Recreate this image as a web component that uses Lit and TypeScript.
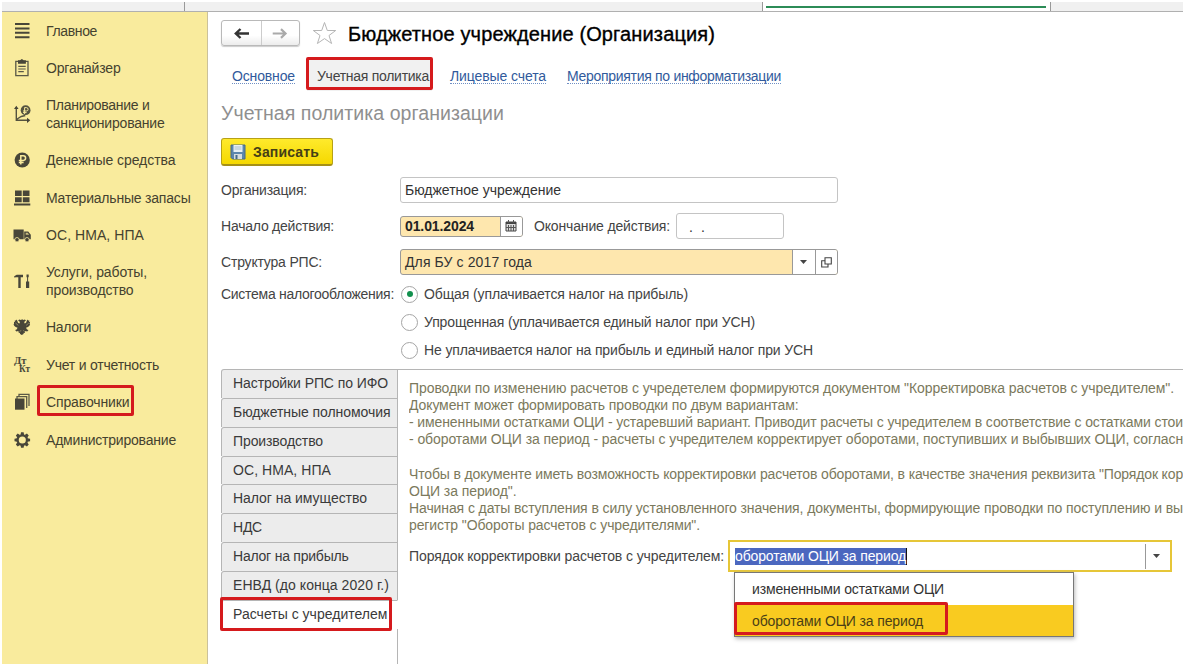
import { LitElement, html, css, svg, nothing } from "lit";
import { customElement, property, state } from "lit/decorators.js";
import { classMap } from "lit/directives/class-map.js";
import { styleMap } from "lit/directives/style-map.js";

const ruler = document.createElement("canvas").getContext("2d")!;

/** A single line of text, tracked so that it occupies a given width. */
@customElement("fit-text")
class FitText extends LitElement {
  @property() text = "";
  @property({ type: Number }) width = 0;
  @state() private spacing = 0;

  static styles = css`
    :host { display: block; white-space: pre; flex: none; }
  `;

  firstUpdated() {
    const cs = getComputedStyle(this);
    ruler.font = `${cs.fontWeight} ${cs.fontSize} ${cs.fontFamily}`;
    const natural = ruler.measureText(this.text).width;
    this.spacing = (this.width - natural) / this.text.length;
  }

  render() {
    return html`<span style=${styleMap({ letterSpacing: `${this.spacing.toFixed(3)}px` })}>${this.text}</span>`;
  }
}

const t = (text: string, width: number) => html`<fit-text .text=${text} .width=${width}></fit-text>`;

const icons: Record<string, unknown> = {
  menu: svg`<path d="M2 2h14.500M2 6.400h14.500M2 10.800h14.500M2 15.200h14.500" stroke="#484639" stroke-width="2"/>`,
  clipboard: svg`<path d="M2.800 2.300h12.200v14.300H2.800z" fill="none" stroke="#5a5847" stroke-width="1.300"/><path d="M5 1.300h2L8.900 0l1.800 1.300h2.200v3.400H5z" fill="#484639"/><path d="M5.300 7.300h7.400M5.300 10h7.400M5.300 12.700h5.500" stroke="#5a5847" stroke-width="1.200"/>`,
  plan: svg`<path d="M3.300 2v13.300h12M3.300 14.500l5-3 4-1" fill="none" stroke="#55533f" stroke-width="1.400"/><path d="M1 4l2.300-3.300L5.600 4zM14 12.700l3.300 2.600-3.300 2.600z" fill="#484639"/><circle cx="12.600" cy="5.200" r="4.900" fill="#55533f"/><path d="M11.600 9V2.600h1.800a1.700 1.700 0 0 1 0 3.400H10M10 7.600h3.600" fill="none" stroke="#f9eb9d" stroke-width="1"/>`,
  coin: svg`<circle cx="9.200" cy="9" r="7.600" fill="#484639"/><path d="M7.800 13.500V4.800h2.500a2.200 2.200 0 0 1 0 4.600H5.800M5.800 11.400h4.800" fill="none" stroke="#f9eb9d" stroke-width="1.500"/>`,
  boxes: svg`<path d="M2 1.500h6.700v5.600H2zM9.800 1.500h6.700v5.600H9.800zM2 8.200h6.700v5.100H2zM9.800 8.200h6.700v5.100H9.800zM1 14.600h16.300v1.900H1z" fill="#484639"/>`,
  truck: svg`<path d="M.5 3.500h10.200v9.800H.5zM11.200 5.500h4l2.600 3.300v4.500h-6.600z" fill="#484639"/><circle cx="4" cy="13.700" r="2.200" fill="#484639" stroke="#f9eb9d" stroke-width=".8"/><circle cx="14" cy="13.700" r="2.200" fill="#484639" stroke="#f9eb9d" stroke-width=".8"/><path d="M12.700 6.700h2l1.500 2.100h-3.500z" fill="#c8bd80"/>`,
  tools: svg`<path d="M1.200 5.600V4.200L3.700 2.800H10v2.400H7.700V16H5.300V5.200H3.200zM13 9.500h3.200V16H13zM14.100 4.800h1v5h-1zM13.500 2.500h2.200v2.800h-2.200z" fill="#484639"/>`,
  eagle: svg`<path d="M9.200 1.200l1 .7 1.700-.4 1.200 1.200-1.200.4-.7 1.600.6.900 1.300-.9.800-2.300 1-1 .3 1.400 1-.8v2l.9-.2-.5 2.200.5.600-.9 1.500-1.300.9-1.900.7 1 1.900 1.500.5-1.300 1.400-1.900-.4-.6 2-.9-.3-.3 1.200-1.700 1-1.700-1-.3-1.200-.9.300-.6-2-1.900.4-1.300-1.400 1.500-.5 1-1.900-1.900-.7-1.300-.9-.9-1.500.5-.6L1 3.800l.9.200V2l1 .8.300-1.400 1 1L5 4.700l1.300.9.600-.9-.7-1.600L5 2.700l1.200-1.200 1.700.4z" fill="#484639"/><path d="M2.500 5l2.800 2.400M15.900 5l-2.800 2.400M6.800 13.800l1.200-1.600M11.600 13.800l-1.200-1.600" stroke="#b9ae75" stroke-width=".6"/>`,
  dtkt: svg`<g font-family="Liberation Serif, serif" font-weight="700" font-size="9.500" fill="#484639"><text x="1" y="7.500" textLength="12.500" lengthAdjust="spacingAndGlyphs">Дт</text><text x="6" y="15.700" textLength="11" lengthAdjust="spacingAndGlyphs">Кт</text></g>`,
  books: svg`<path d="M6 3.500V1.300h10V13M4 6V3.600h9.700V15" fill="none" stroke="#5b5946" stroke-width="1.300"/><path d="M2 5.500h9.500v11.200H2z" fill="#484639"/>`,
  gear: svg`<circle cx="9.300" cy="9" r="4.700" fill="none" stroke="#484639" stroke-width="2.300"/>${[0, 45, 90, 135, 180, 225, 270, 315].map(
    (a) => svg`<path d="M8 1.200h2.600l.5 2.700H7.500z" fill="#484639" transform=${`rotate(${a} 9.300 9)`}/>`
  )}`,
};

type Line = [string, number];
const sections: { icon: string; lines: Line[]; mark?: boolean }[] = [
  { icon: "menu", lines: [["Главное", 51]] },
  { icon: "clipboard", lines: [["Органайзер", 74.5]] },
  { icon: "plan", lines: [["Планирование и", 103.5], ["санкционирование", 118.5]] },
  { icon: "coin", lines: [["Денежные средства", 129.5]] },
  { icon: "boxes", lines: [["Материальные запасы", 144.5]] },
  { icon: "truck", lines: [["ОС, НМА, НПА", 98]] },
  { icon: "tools", lines: [["Услуги, работы,", 101], ["производство", 87.5]] },
  { icon: "eagle", lines: [["Налоги", 45]] },
  { icon: "dtkt", lines: [["Учет и отчетность", 113]] },
  { icon: "books", lines: [["Справочники", 83.5]], mark: true },
  { icon: "gear", lines: [["Администрирование", 130]] },
];

const pages: Line[] = [
  ["Настройки РПС по ИФО", 155],
  ["Бюджетные полномочия", 157.5],
  ["Производство", 90],
  ["ОС, НМА, НПА", 98],
  ["Налог на имущество", 134],
  ["НДС", 29],
  ["Налог на прибыль", 115.5],
  ["ЕНВД (до конца 2020 г.)", 156],
  ["Расчеты с учредителем", 154.5],
];

const notes: Line[] = [
  ['Проводки по изменению расчетов с учредетелем формируются документом "Корректировка расчетов с учредителем".', 765],
  ["Документ может формировать проводки по двум вариантам:", 389.5],
  ["- имененными остатками ОЦИ - устаревший вариант. Приводит расчеты с учредителем в соответствие с остатками стои", 774],
  ["- оборотами ОЦИ за период - расчеты с учредителем корректирует оборотами, поступивших и выбывших ОЦИ, согласн", 774],
  ["", 0],
  ['Чтобы в документе иметь возможность корректировки расчетов оборотами, в качестве значения реквизита "Порядок кор', 774],
  ['ОЦИ за период".', 107.5],
  ["Начиная с даты вступления в силу установленного значения, документы, формирующие проводки по поступлению и вы", 774],
  ['регистр "Обороты расчетов с учредителями".', 291],
];

@customElement("app-root")
class AppRoot extends LitElement {
  static styles = css`
    *, :host { box-sizing: border-box; }
    :host {
      display: flex; flex-direction: column; width: 1185px; height: 666px;
      padding: 2px; overflow: hidden; background: #fff; color: #444;
      font: 14px/17px "Liberation Sans", Arial, sans-serif;
    }
    svg { display: block; flex: none; }
    .tabs { display: flex; flex: none; height: 10px; background: #f0f0f0; border-bottom: 1px solid #b0b0b0; }
    .tab { border-right: 1px solid #999; }
    .tab.first { width: 183px; }
    .tab.second { width: 578px; }
    .tab.active { width: 288px; background: #fff; padding: 4px 4px 0 3px; }
    .line { height: 2px; background: #2c8c57; }
    .body { display: flex; flex: 1; min-height: 0; overflow: hidden; }
    .side { width: 206px; flex: none; background: #f9eb9d; border-right: 1px solid #cbc19a; color: #45422f; }
    .item { display: flex; align-items: center; height: 37.5px; padding-left: 11px; gap: 15px; }
    .item.tall { height: 54.5px; }
    .item .lines { position: relative; line-height: 17.4px; padding-top: 1px; }
    .mark { position: absolute; border: 3px solid #d51a1d; border-radius: 2px; }
    .mark.books { left: -9px; top: -8px; width: 97px; height: 31px; }
    .main { flex: 1; min-width: 0; padding: 8px 0 0 13px; display: flex; flex-direction: column; overflow: hidden; }
    .main > * { flex: none; }
    .head { display: flex; align-items: center; height: 26px; }
    .nav { display: flex; width: 79px; height: 26px; border: 1px solid #b9b9b9; border-radius: 3px; background: linear-gradient(#fff 60%, #ececec); box-shadow: 0 1px 1px #ccc; }
    .nav svg + svg { border-left: 1px solid #ccc; }
    .star { margin: 0 11px 0 12px; }
    .title { font-size: 20px; line-height: 26px; color: #000; -webkit-text-stroke: .35px #000; padding-top: 1px; }
    .links { display: flex; align-items: center; height: 34px; margin-top: 11px; padding-left: 11px; color: #315a9c; }
    .link { border-bottom: 1px dotted #6f8fc4; line-height: 14px; padding-top: 1px; margin-top: 4px; }
    .chosen { position: relative; margin: 0 18px 0 12px; padding: 11px 0 6px 10px; width: 125px; color: #444; background: #f1f1f1; }
    .mark.policy { inset: 0 -1px 1px -1px; }
    .gap { margin-right: 21px; }
    .subtitle { font-size: 19.5px; line-height: 24px; color: #8f8f8f; margin-top: 10px; }
    .save { display: flex; align-items: center; gap: 7px; width: 112px; height: 28px; margin-top: 13px; padding-left: 8px; border: 1px solid #b7a116; border-bottom: 2px solid #a59016; border-radius: 3px; background: linear-gradient(#ffea2c, #f5d800); font-weight: 700; color: #453f16; }
    .save fit-text { padding-top: 1px; }
    .row { display: flex; align-items: center; height: 26px; margin-top: 10px; }
    .row.lead { margin-top: 11px; }
    .label { width: 179px; flex: none; }
    .field { display: flex; align-items: center; height: 26px; border: 1px solid #c4c4c4; border-radius: 3px; padding-left: 4px; background: #fff; color: #333; overflow: hidden; }
    .field.org, .field.rps { width: 438px; }
    .field.rps, .field.date { border-color: #999; background: #fee7ae; }
    .field.date { width: 123px; height: 21px; font-weight: 700; color: #222; }
    .field.end { width: 108px; padding: 2px 0 0 8px; margin-left: 6px; }
    .cell { align-self: stretch; display: grid; place-items: center; width: 22.5px; border-left: 1px solid #999; background: #fff; }
    .cell.push { margin-left: auto; }
    .until { margin-left: 11px; }
    .choices { display: flex; margin-top: 5px; margin-bottom: 5px; }
    .choices .label { width: 180px; padding-top: 6px; }
    .option { display: flex; align-items: center; height: 28px; gap: 6px; }
    .radio { width: 17px; height: 17px; border: 1px solid #a5a5a5; border-radius: 50%; display: grid; place-items: center; }
    .dot { width: 6px; height: 6px; border-radius: 50%; background: #12904e; }
    .main > .panel { display: flex; flex: 1; min-height: 0; }
    .pages { display: flex; flex-direction: column; width: 177px; flex: none; }
    .page { position: relative; height: 28.85px; flex: none; border: 1px solid #b5b5b5; border-bottom: 0; border-radius: 3px 0 0 0; background: #ececec; padding: 5px 0 0 11px; color: #3a3a3a; }
    .page.on { background: #fff; border-color: #b5b5b5 transparent transparent; }
    .mark.calc { left: -2px; top: -4px; width: 172px; height: 34px; }
    .rest { flex: 1; border-right: 1px solid #b5b5b5; }
    .content { flex: 1; min-width: 0; border-top: 1px solid #b5b5b5; padding: 10px 0 0 11px; }
    .notes { line-height: 17.15px; color: #7b795c; overflow: hidden; }
    .note { height: 17.15px; }
    .order { display: flex; align-items: center; margin-top: 6px; height: 32px; }
    .combo { position: relative; display: flex; align-items: center; width: 444px; height: 32px; margin-left: 4px; border: 2px solid #e6c638; padding-left: 5px; background: #fff; }
    .picked { background: #4b67bf; color: #fff; border-right: 1px solid #111; line-height: 17px; }
    .drop { margin-left: auto; height: 25px; width: 25px; border-left: 1px solid #999; display: grid; place-items: center; padding-right: 3px; }
    .list { position: absolute; left: 4px; top: 30px; width: 340px; height: 65px; border: 1px solid #777; background: #fff; box-shadow: 1px 2px 4px #bbb; color: #333; }
    .entry { height: 31.5px; padding: 8px 0 0 17px; }
    .entry.on { background: #f9cb20; color: #4a3f16; }
    .mark.chosen-entry { left: -1px; top: 29px; width: 214px; height: 33px; }
  `;

  private arrow() {
    return svg`<path d="M0 0h7l-3.500 4z" fill="#444"/>`;
  }

  render() {
    return html`
      <div class="tabs">
        <div class="tab first"></div>
        <div class="tab second"></div>
        <div class="tab active"><div class="line"></div></div>
      </div>
      <div class="body">
        <nav class="side">
          ${sections.map(
            (s) => html`<div class=${classMap({ item: true, tall: s.lines.length > 1 })}>
              <svg width="18" height="18" viewBox="0 0 18 18">${icons[s.icon]}</svg>
              <div class="lines">${s.lines.map(([a, w]) => t(a, w))}${s.mark ? html`<div class="mark books"></div>` : nothing}</div>
            </div>`
          )}
        </nav>
        <main class="main">
          <div class="head">
            <div class="nav">
              <svg width="39" height="24" viewBox="0 0 39 24"><path d="M27 12.500H14M18.500 8l-4.700 4.500 4.700 4.500" fill="none" stroke="#333" stroke-width="2.400"/></svg>
              <svg width="38" height="24" viewBox="0 0 38 24"><path d="M11 12.500h13M19.500 8l4.700 4.500-4.700 4.500" fill="none" stroke="#aaa" stroke-width="2.200"/></svg>
            </div>
            <svg class="star" width="25" height="24" viewBox="0 0 25 24"><path d="M12.500 1.500l2.800 8h8.400l-6.700 5 2.600 8-7.100-4.900-7.100 4.900 2.600-8-6.700-5h8.400z" fill="#fff" stroke="#b5b5b5"/></svg>
            <div class="title">${t("Бюджетное учреждение (Организация)", 367)}</div>
          </div>
          <div class="links">
            <div class="link">${t("Основное", 63)}</div>
            <div class="chosen">${t("Учетная политика", 112)}<div class="mark policy"></div></div>
            <div class="link gap">${t("Лицевые счета", 96)}</div>
            <div class="link">${t("Мероприятия по информатизации", 214)}</div>
          </div>
          <div class="subtitle">${t("Учетная политика организации", 283)}</div>
          <div class="save">
            <svg width="16" height="16" viewBox="0 0 16 16"><path d="M1 1h14v14H2.500L1 13.500z" fill="#5c87ad" stroke="#45698a"/><path d="M3.500 1h9v7h-9z" fill="#e9f1f5"/><path d="M4.500 3h7M4.500 5h7" stroke="#a9bfce"/><path d="M4 10h8v5H4z" fill="#d5dde0"/><path d="M5.500 11h2v4h-2z" fill="#45698a"/></svg>
            ${t("Записать", 66)}
          </div>
          <div class="row lead">
            <div class="label">${t("Организация:", 86)}</div>
            <div class="field org">${t("Бюджетное учреждение", 156)}</div>
          </div>
          <div class="row">
            <div class="label">${t("Начало действия:", 113)}</div>
            <div class="field date">${t("01.01.2024", 69)}
              <div class="cell push"><svg width="12" height="12" viewBox="0 0 12 12"><path d="M1 2h10v9H1z" fill="#ddd" stroke="#444"/><path d="M1 3h10" stroke="#444" stroke-width="2"/><path d="M3.500 0v3M8.500 0v3M3.500 5v6M6 5v6M8.500 5v6M1 7.500h10" stroke="#555"/></svg></div>
            </div>
            <div class="until">${t("Окончание действия:", 136)}</div>
            <div class="field end">${t(" .  .", 20)}</div>
          </div>
          <div class="row">
            <div class="label">${t("Структура РПС:", 101)}</div>
            <div class="field rps">${t("Для БУ с 2017 года", 127)}
              <div class="cell push"><svg width="7" height="4" viewBox="0 0 7 4">${this.arrow()}</svg></div>
              <div class="cell"><svg width="11" height="11" viewBox="0 0 11 11"><path d="M4 .7h6.300V7H4zM4 3.700H.7V10H7V7" fill="none" stroke="#444" stroke-width="1.100"/></svg></div>
            </div>
          </div>
          <div class="choices">
            <div class="label">${t("Система налогообложения:", 173)}</div>
            <div>
              <div class="option"><span class="radio"><span class="dot"></span></span>${t("Общая (уплачивается налог на прибыль)", 264)}</div>
              <div class="option"><span class="radio"></span>${t("Упрощенная (уплачивается единый налог при УСН)", 331)}</div>
              <div class="option"><span class="radio"></span>${t("Не уплачивается налог на прибыль и единый налог при УСН", 389)}</div>
            </div>
          </div>
          <div class="panel">
            <div class="pages">
              ${pages.map(([a, w], i) => {
                const on = i === pages.length - 1;
                return html`<div class=${classMap({ page: true, on })}>${t(a, w)}${on ? html`<div class="mark calc"></div>` : nothing}</div>`;
              })}
              <div class="rest"></div>
            </div>
            <div class="content">
              <div class="notes">${notes.map(([a, w]) => html`<div class="note">${a ? t(a, w) : nothing}</div>`)}</div>
              <div class="order">
                ${t("Порядок корректировки расчетов с учредителем:", 315)}
                <div class="combo">
                  <div class="picked">${t("оборотами ОЦИ за период", 171)}</div>
                  <div class="drop"><svg width="7" height="4" viewBox="0 0 7 4">${this.arrow()}</svg></div>
                  <div class="list">
                    <div class="entry">${t("измененными остатками ОЦИ", 192)}</div>
                    <div class="entry on">${t("оборотами ОЦИ за период", 171)}</div>
                    <div class="mark chosen-entry"></div>
                  </div>
                </div>
              </div>
            </div>
          </div>
        </main>
      </div>
    `;
  }
}
